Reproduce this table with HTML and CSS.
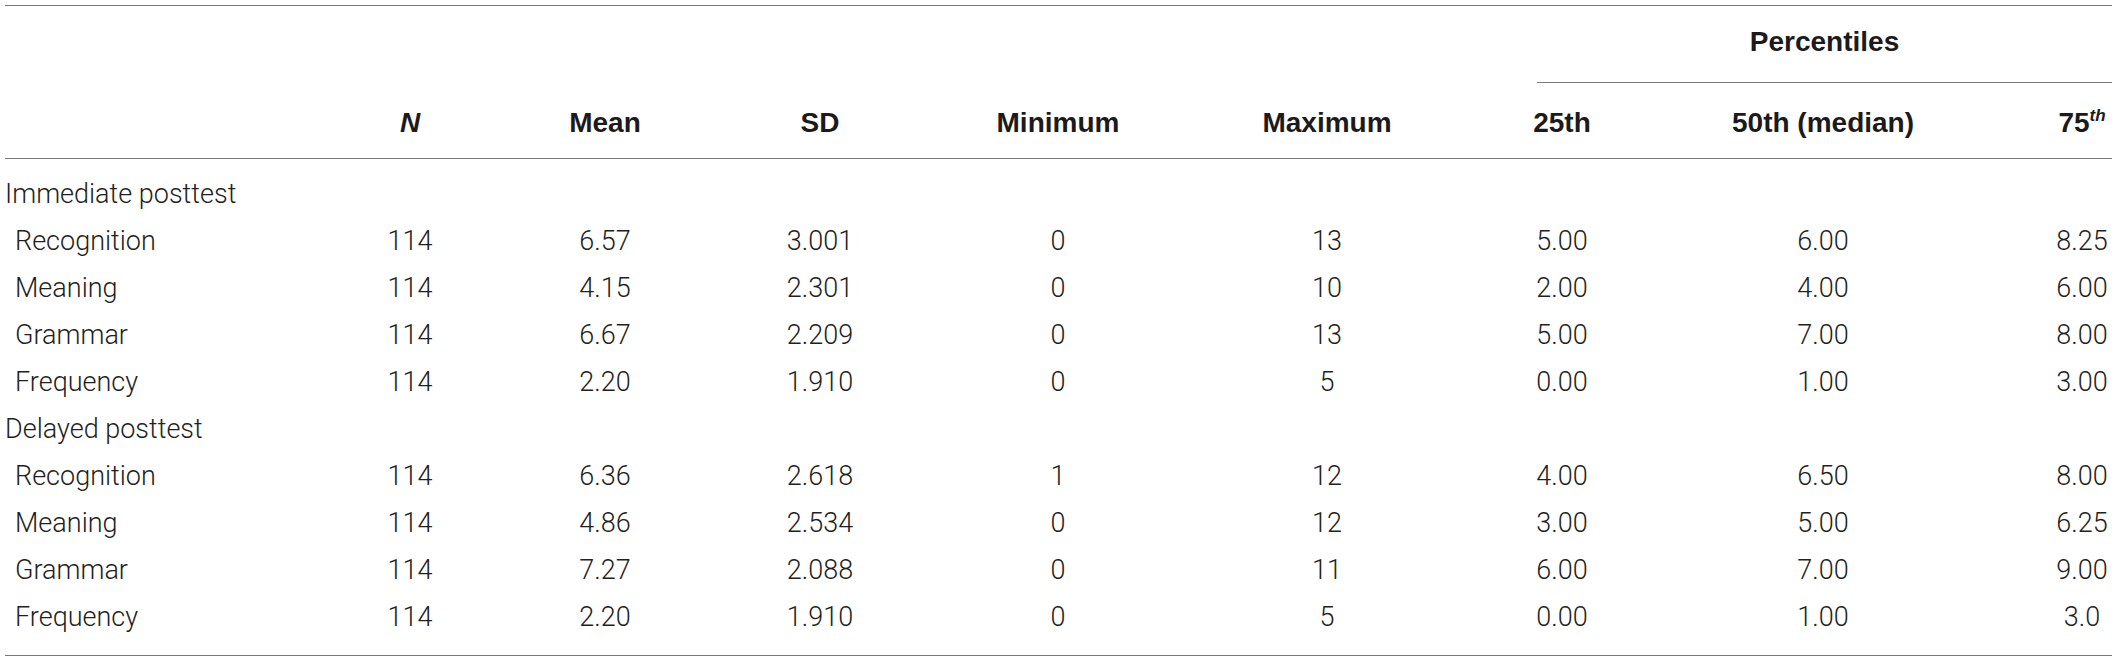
FILE: index.html
```html
<!DOCTYPE html>
<html lang="en">
<head>
<meta charset="utf-8">
<title>Descriptive statistics</title>
<link rel="stylesheet" href="styles.css">
</head>
<body>
<table class="stats">
  <colgroup>
    <col class="c-label"><col class="c-n"><col class="c-mean"><col class="c-sd"><col class="c-min"><col class="c-max"><col class="c-p25"><col class="c-p50"><col class="c-p75">
  </colgroup>
  <thead>
    <tr>
      <th class="hd span" rowspan="2"></th>
      <th class="hd span" rowspan="2"><i>N</i></th>
      <th class="hd span" rowspan="2">Mean</th>
      <th class="hd span" rowspan="2">SD</th>
      <th class="hd span" rowspan="2">Minimum</th>
      <th class="hd span" rowspan="2">Maximum</th>
      <th class="hd group" colspan="3"><div class="group-label">Percentiles</div></th>
    </tr>
    <tr>
      <th class="hd sub">25th</th>
      <th class="hd sub">50th (median)</th>
      <th class="hd sub">75<sup class="ord">th</sup></th>
    </tr>
  </thead>
  <tbody>
    <tr class="first"><td class="lbl grp">Immediate posttest</td><td></td><td></td><td></td><td></td><td></td><td></td><td></td><td></td></tr>
    <tr><td class="lbl">Recognition</td><td>114</td><td>6.57</td><td>3.001</td><td>0</td><td>13</td><td>5.00</td><td>6.00</td><td>8.25</td></tr>
    <tr><td class="lbl">Meaning</td><td>114</td><td>4.15</td><td>2.301</td><td>0</td><td>10</td><td>2.00</td><td>4.00</td><td>6.00</td></tr>
    <tr><td class="lbl">Grammar</td><td>114</td><td>6.67</td><td>2.209</td><td>0</td><td>13</td><td>5.00</td><td>7.00</td><td>8.00</td></tr>
    <tr><td class="lbl">Frequency</td><td>114</td><td>2.20</td><td>1.910</td><td>0</td><td>5</td><td>0.00</td><td>1.00</td><td>3.00</td></tr>
    <tr><td class="lbl grp">Delayed posttest</td><td></td><td></td><td></td><td></td><td></td><td></td><td></td><td></td></tr>
    <tr><td class="lbl">Recognition</td><td>114</td><td>6.36</td><td>2.618</td><td>1</td><td>12</td><td>4.00</td><td>6.50</td><td>8.00</td></tr>
    <tr><td class="lbl">Meaning</td><td>114</td><td>4.86</td><td>2.534</td><td>0</td><td>12</td><td>3.00</td><td>5.00</td><td>6.25</td></tr>
    <tr><td class="lbl">Grammar</td><td>114</td><td>7.27</td><td>2.088</td><td>0</td><td>11</td><td>6.00</td><td>7.00</td><td>9.00</td></tr>
    <tr class="last"><td class="lbl">Frequency</td><td>114</td><td>2.20</td><td>1.910</td><td>0</td><td>5</td><td>0.00</td><td>1.00</td><td>3.0</td></tr>
  </tbody>
</table>
</body>
</html>
```

FILE: styles.css
```css
html, body {
  margin: 0;
  padding: 0;
  background: #ffffff;
}

.stats {
  margin: 5px 5px 0 5px;
  width: 2107px;
  table-layout: fixed;
  border-collapse: separate;
  border-spacing: 0;
  border-top: 1px solid #7a7a7a;
  border-bottom: 1px solid #7a7a7a;
  font-family: Roboto, "Liberation Sans", sans-serif;
  color: #231f20;
}

.c-label { width: 253px; }
.c-n { width: 304px; }
.c-mean { width: 86px; }
.c-sd { width: 344px; }
.c-min { width: 132px; }
.c-max { width: 406px; }
.c-p25 { width: 64px; }
.c-p50 { width: 458px; }
.c-p75 { width: 60px; }

.hd {
  font-family: "Liberation Sans", Arial, sans-serif;
  font-weight: 700;
  font-size: 28px;
  line-height: 32px;
  color: #1c1a1b;
  text-align: center;
  padding: 0;
  white-space: nowrap;
}

.span {
  vertical-align: bottom;
  padding-bottom: 19px;
  border-bottom: 1px solid #7a7a7a;
}

.group {
  padding-top: 20px;
  vertical-align: top;
}

.group-label {
  margin-left: 7px;
  padding-bottom: 24px;
  border-bottom: 1px solid #7a7a7a;
}

.sub {
  padding-top: 24px;
  padding-bottom: 19px;
  border-bottom: 1px solid #7a7a7a;
}

.ord {
  font-style: italic;
  font-size: 17px;
  line-height: 0;
  vertical-align: 11px;
}

.stats td {
  font-weight: 300;
  font-size: 27px;
  line-height: 47px;
  padding: 0;
  text-align: center;
  white-space: nowrap;
}

.stats td.lbl {
  text-align: left;
  padding-left: 10px;
}

.stats td.grp {
  padding-left: 0;
}

.first td {
  padding-top: 12px;
}

.last td {
  padding-bottom: 14px;
}
```
